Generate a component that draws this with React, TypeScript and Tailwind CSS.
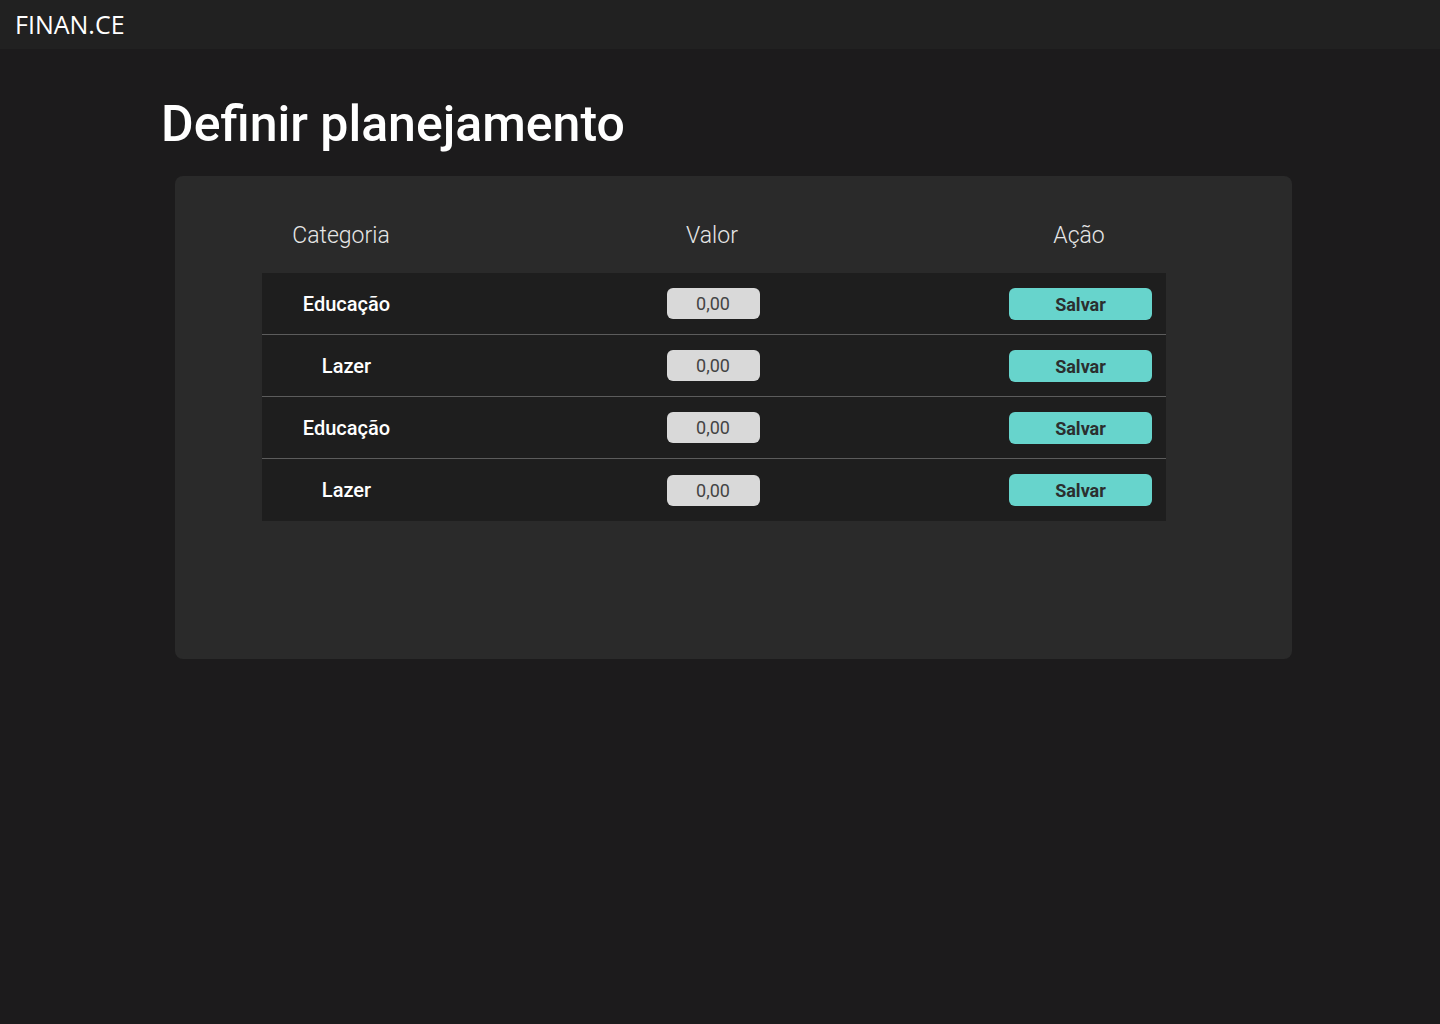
import React from 'react';

const rows = [
  { name: 'Educação', value: '0,00' },
  { name: 'Lazer', value: '0,00' },
  { name: 'Educação', value: '0,00' },
  { name: 'Lazer', value: '0,00' },
];

export default function App() {
  return (
    <div className="min-h-[1024px] bg-[#1c1b1c] font-['Roboto',sans-serif]">
      {/* Top bar */}
      <header className="h-[49px] bg-[#212121] flex items-center px-[15px]">
        <span className="font-['Open_Sans',sans-serif] text-[25px] text-white leading-none">FINAN.CE</span>
      </header>

      <main className="pl-[161px] pt-[46px]">
        <h1 className="text-[50px] font-medium text-white leading-[58px]">Definir planejamento</h1>

        <section className="mt-[23px] ml-[14px] w-[1117px] h-[483px] bg-[#2a2a2a] rounded-[8px] pt-[43px] pl-[87px]">
          <div className="w-[904px]">
            <div className="grid grid-cols-[158px_584px_150px] h-[54px] text-[23px] font-light text-[#e6e6e6]">
              <div className="text-center">Categoria</div>
              <div className="text-center">Valor</div>
              <div className="text-center">Ação</div>
            </div>

            <div className="bg-[#1e1e1e]">
              {rows.map((row, i) => (
                <div
                  key={i}
                  className={`grid grid-cols-[169px_564px_171px] items-center h-[62px] ${i < rows.length - 1 ? 'border-b border-[#5c5c5c]' : ''}`}
                >
                  <div className="text-center text-[20px] font-medium text-white">{row.name}</div>
                  <div className="flex justify-center">
                    <div className="w-[93px] h-[31px] rounded-[6px] bg-[#d9d9d9] flex items-center justify-center text-[18px] text-[#444444]">
                      {row.value}
                    </div>
                  </div>
                  <div className="flex justify-center">
                    <button className="w-[143px] h-[32px] rounded-[6px] bg-[#67d4cc] text-[18px] font-bold text-[#2b2f2f] pt-[1px]">
                      Salvar
                    </button>
                  </div>
                </div>
              ))}
            </div>
          </div>
        </section>
      </main>
    </div>
  );
}
